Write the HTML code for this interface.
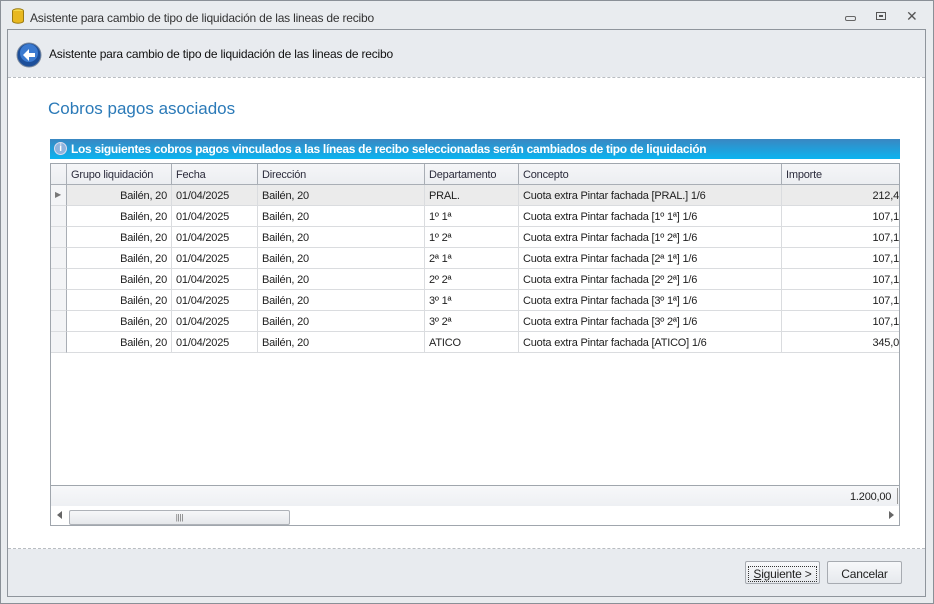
<!DOCTYPE html>
<html><head><meta charset="utf-8"><style>
*{margin:0;padding:0;box-sizing:border-box}
body{width:934px;height:604px;background:#eef0f3;font-family:"Liberation Sans",sans-serif;font-size:11px;color:#1e1e1e;position:relative;overflow:hidden;letter-spacing:-0.2px}
.a{position:absolute}
#win{left:0;top:0;width:934px;height:604px;border:1px solid #8a9097;background:#e9ecef}
#frame{left:7px;top:29px;width:919px;height:568px;border:1px solid #8f959c;background:#e8ebef}
#content{left:8px;top:77px;width:917px;height:472px;background:#fff;border-top:1px dashed #b9bdc2;border-bottom:1px dashed #b9bdc2}
.grid{left:50px;top:163px;width:850px;height:363px;border:1px solid #a0a6ad;background:#fff;overflow:hidden}
.hdr{position:absolute;top:0;height:21px;border-right:1px solid #a9aeb5;border-bottom:1px solid #a9aeb5;background:linear-gradient(#f5f6f8,#eceef1);padding:5px 4px 0;color:#2b2b3b}
.cell{position:absolute;height:21px;border-right:1px solid #dadcdf;border-bottom:1px solid #dadcdf;padding:5px 4px 0;white-space:nowrap;overflow:hidden}
.r{text-align:right}
.btn{height:23px;border:1px solid #a7abb1;border-radius:2px;background:linear-gradient(#f7f8fa,#e6e9ed);text-align:center;padding-top:5px;font-size:12px;color:#222}
</style></head><body>
<div class="a" id="win"></div>
<svg class="a" style="left:11px;top:8px" width="14" height="17"><ellipse cx="7" cy="3" rx="5.5" ry="2.2" fill="#f6d84a" stroke="#9a7a10"/><path d="M1.5 3v10a5.5 2.2 0 0 0 11 0V3" fill="#e8b820" stroke="#9a7a10"/></svg>
<div class="a" style="left:30px;top:11px;font-size:12px;color:#333">Asistente para cambio de tipo de liquidación de las lineas de recibo</div>
<div class="a" style="left:845px;top:16px;width:11px;height:5px;border:1px solid #666;border-radius:2px"></div>
<div class="a" style="left:876px;top:12px;width:10px;height:8px;border:1px solid #555"><div style="margin:2px;width:4px;height:2px;border:1px solid #555"></div></div>
<div class="a" style="left:906px;top:8px;font-size:14px;color:#555">✕</div>
<div class="a" id="frame"></div>
<svg class="a" style="left:16px;top:42px" width="26" height="26"><circle cx="13" cy="13" r="12" fill="#1d4f9a" stroke="#7a8aa0"/><circle cx="13" cy="11" r="9" fill="#3b7ad0"/><path d="M7 13l6-6v4h6v4h-6v4z" fill="#fff"/></svg>
<div class="a" style="left:49px;top:47px;font-size:12px;color:#111">Asistente para cambio de tipo de liquidación de las lineas de recibo</div>
<div class="a" id="content"></div>
<div class="a" style="left:48px;top:99px;font-size:17px;color:#2b7ab8;letter-spacing:0">Cobros pagos asociados</div>
<div class="a" style="left:50px;top:139px;width:850px;height:20px;background:linear-gradient(#3a87c2,#0ab4f0)"></div>
<div class="a" style="left:54px;top:142px;width:13px;height:13px;border-radius:50%;background:#8fb4de;border:1px solid #dde;color:#fff;font-size:10px;font-weight:bold;text-align:center;line-height:12px">i</div>
<div class="a" style="left:71px;top:142px;color:#fff;font-weight:bold;font-size:12px;letter-spacing:-0.3px">Los siguientes cobros pagos vinculados a las líneas de recibo seleccionadas serán cambiados de tipo de liquidación</div>
<div class="a grid">
<div class="hdr" style="left:0;width:16px"></div>
<div class="hdr" style="left:16px;width:105px">Grupo liquidación</div>
<div class="hdr" style="left:121px;width:86px">Fecha</div>
<div class="hdr" style="left:207px;width:167px">Dirección</div>
<div class="hdr" style="left:374px;width:94px">Departamento</div>
<div class="hdr" style="left:468px;width:263px">Concepto</div>
<div class="hdr" style="left:731px;width:130px">Importe</div>
<div id="rows"></div>
<div class="a" style="left:0;top:321px;width:850px;height:21px;border-top:1px solid #a0a6ad;background:linear-gradient(#f7f8fa,#eef0f3)"></div>
<div class="a" style="left:799px;top:327px">1.200,00</div>
<div class="a" style="left:846px;top:324px;width:1px;height:16px;background:#999"></div>
<div class="a" style="left:0;top:342px;width:850px;height:20px;background:#fff"></div>
<div class="a" style="left:6px;top:347px;width:0;height:0;border:4px solid transparent;border-right:5px solid #666;border-left:0"></div>
<div class="a" style="left:18px;top:346px;width:221px;height:15px;border:1px solid #aeb2b8;border-radius:2px;background:linear-gradient(#f6f7f9,#e6e8eb);text-align:center;font-size:8px;color:#666;padding-top:2px">||||</div>
<div class="a" style="left:838px;top:347px;width:0;height:0;border:4px solid transparent;border-left:5px solid #666;border-right:0"></div>
</div>
<div class="a btn" style="left:745px;top:561px;width:75px"><span style="border:1px dotted #333;padding:0 4px"><u>S</u>iguiente &gt;</span></div>
<div class="a btn" style="left:827px;top:561px;width:75px">Cancelar</div>
<script>
var d=[["PRAL.","PRAL.","212,4"],["1º 1ª","1º 1ª","107,1"],["1º 2ª","1º 2ª","107,1"],["2ª 1ª","2ª 1ª","107,1"],["2º 2ª","2º 2ª","107,1"],["3º 1ª","3º 1ª","107,1"],["3º 2ª","3º 2ª","107,1"],["ATICO","ATICO","345,0"]];
var h="";d.forEach(function(r,i){var t=21+i*21;var bg=i==0?"background:#ebebeb;":"";
h+='<div class="cell" style="left:0;top:'+t+'px;width:16px;'+bg+'border-right-color:#a9aeb5;background:#f3f4f6;color:#777;font-size:8px">'+(i==0?'▶':'')+'</div>';
h+='<div class="cell r" style="left:16px;top:'+t+'px;width:105px;'+bg+'">Bailén, 20</div>';
h+='<div class="cell" style="left:121px;top:'+t+'px;width:86px;'+bg+'">01/04/2025</div>';
h+='<div class="cell" style="left:207px;top:'+t+'px;width:167px;'+bg+'">Bailén, 20</div>';
h+='<div class="cell" style="left:374px;top:'+t+'px;width:94px;'+bg+'">'+r[0]+'</div>';
h+='<div class="cell" style="left:468px;top:'+t+'px;width:263px;'+bg+'">Cuota extra Pintar fachada ['+r[1]+'] 1/6</div>';
h+='<div class="cell r" style="left:731px;top:'+t+'px;width:118px;padding-right:0;'+bg+'">'+r[2]+'</div>';});
document.getElementById("rows").innerHTML=h;
</script>
</body></html>
